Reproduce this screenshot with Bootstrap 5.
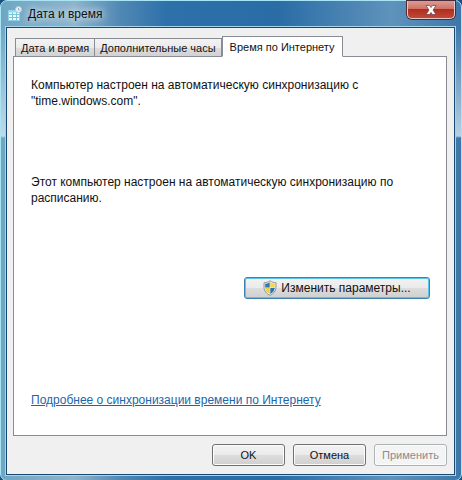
<!DOCTYPE html>
<html lang="ru">
<head>
<meta charset="utf-8">
<meta name="viewport" content="width=device-width, initial-scale=1">
<title>Дата и время</title>
<link href="https://cdn.jsdelivr.net/npm/bootstrap@5.3.0/dist/css/bootstrap.min.css" rel="stylesheet">
<style>
body { font-family: "Liberation Sans", Arial, sans-serif; font-size: 12px; line-height: 16px; color: #111; background: #174f7d; }
.win { border: 1px solid #a9e4f5; border-radius: 7px; padding: 0 6px 5px 5px;
  background: linear-gradient(#fff0 0, #fff0 26px, #d4e7f1cc 135px, #fff0 137px), linear-gradient(90deg, #6fa6c4 0, #8fb3cb 16%, #5088b4 26%, #2d70aa 36%, #2a6ca6 60%, #5f93bb 85%, #3d76a8 100%); }
.titlebar { height: 26px; padding-left: 2px; }
.title-group { gap: 6px; }
.caption-text { text-shadow: 0 0 6px #d6e6f0, 0 0 9px #d6e6f0; }
.close-btn { width: 48px; height: 18px; border: 1px solid #e6c7c9; border-top: 0; border-radius: 0 0 5px 5px; background: linear-gradient(#dc9d93 0, #cf7264 45%, #b02e20 50%, #c14835 100%); box-shadow: 0 0 0 1px #4c2b3c; }
.client { border: 1px solid #174a73; outline: 1px solid #a5d5ec; background: #f0f0f0; padding: 8px 7px 8px 6px; }
.tabs { padding-left: 2px; margin-bottom: -1px; border: 0; }
.tabs .nav-link { font-size: 11px; line-height: 16px; height: 19px; padding: 1px 5px 0; margin: 0; border: 1px solid #898c95; border-radius: 0; color: #111; background: linear-gradient(#f3f3f3, #ebebeb 50%, #dddddd 51%, #d2d2d2); white-space: nowrap; }
.tabs .nav-item + .nav-item .nav-link { border-left: 0; }
.tabs .nav-link.active { height: 21px; padding: 1px 7px 0; border: 1px solid #898c95 !important; border-bottom-color: #fff !important; background: #fff; color: #111; }
.sheet { border: 1px solid #898c95; background: #fff; padding: 20px 16px 27px 17px; }
.sync-note { min-height: 97px; margin: 0; }
.schedule-note { min-height: 103px; margin: 0; }
.cmd { font-size: 12px; line-height: 16px; height: 22px; padding: 0; color: #111; border: 1px solid #707070; border-radius: 3px; background: linear-gradient(#f2f2f2, #ebebeb 50%, #dddddd 51%, #cfcfcf); box-shadow: inset 0 0 0 1px #fcfcfc; }
.cmd-foot { width: 73px; font-size: 11px; }
.cmd-main { width: 186px; border-color: #3c7fb1; box-shadow: inset 0 0 0 1px #5cc5e8; }
.cmd:disabled { color: #8b8b8b; border-color: #adb2b5; background: #f4f4f4; opacity: 1; }
.more { color: #1b66a8; }
.more-row { margin-top: 93px; }
</style>
</head>
<body>
<main class="win">
  <header class="titlebar d-flex align-items-start justify-content-between">
    <div class="title-group d-flex align-items-center h-100">
      <svg width="14" height="16" viewBox="0 0 14 16" aria-hidden="true">
        <path d="M.5 4.500H11.500V14.500H.5Z" fill="#eafcfe" stroke="#8fd0e2"/>
        <path d="M1 8.500H11M1 11.500H11M4.500 6V14M8.500 6V14" stroke="#74c4db"/>
        <path d="M1 5.500H11" stroke="#9adbe9" stroke-width="2"/>
        <circle cx="10.500" cy="3.500" r="3" fill="#e9f2f6" stroke="#b3c9d6"/>
        <path d="M10.500 2V4H12" fill="none" stroke="#7f9fb2" stroke-width=".8"/>
      </svg>
      <span class="caption-text">Дата и время</span>
    </div>
    <button type="button" class="close-btn d-flex align-items-center justify-content-center p-0" aria-label="Закрыть">
      <svg width="12" height="10" viewBox="0 0 12 10" aria-hidden="true"><path d="M1 .5H4.500L6 2.500 7.500.5H11L8 5 11 9.500H7.500L6 7.500 4.500 9.500H1L4 5Z" fill="#fff" stroke="#6b3a40" stroke-width=".7"/></svg>
    </button>
  </header>
  <div class="client">
    <ul class="nav tabs align-items-end flex-nowrap position-relative" role="tablist">
      <li class="nav-item" role="presentation"><button type="button" class="nav-link" role="tab">Дата и время</button></li>
      <li class="nav-item" role="presentation"><button type="button" class="nav-link" role="tab">Дополнительные часы</button></li>
      <li class="nav-item" role="presentation"><button type="button" class="nav-link active" role="tab" aria-selected="true">Время по Интернету</button></li>
    </ul>
    <section class="sheet">
      <p class="sync-note">Компьютер настроен на автоматическую синхронизацию с "time.windows.com".</p>
      <p class="schedule-note">Этот компьютер настроен на автоматическую синхронизацию по расписанию.</p>
      <div class="d-flex justify-content-end">
        <button type="button" class="cmd cmd-main d-flex align-items-center justify-content-center gap-1">
          <svg width="14" height="16" viewBox="0 0 14 16" aria-hidden="true">
            <path d="M7 .7C5 2.200 3 2.700 1 2.700V7C1 11 3.500 13.800 7 15.300 10.500 13.800 13 11 13 7V2.700C11 2.700 9 2.200 7 .7Z" fill="#e8edf0" stroke="#75848c" stroke-width=".8"/>
            <path d="M6.700 2.200Q4.500 3.700 2.200 3.800V7.500H6.700Z" fill="#3477b5"/>
            <path d="M7.300 2.200Q9.500 3.700 11.800 3.800V7.500H7.300Z" fill="#f2d64b"/>
            <path d="M2.200 8.100H6.700V13.900Q2.800 12 2.200 8.100Z" fill="#f0cf3c"/>
            <path d="M7.300 8.100H11.800Q11.200 12 7.300 13.900Z" fill="#2f70ae"/>
          </svg>
          <span>Изменить параметры...</span>
        </button>
      </div>
      <div class="more-row"><a href="#" class="more">Подробнее о синхронизации времени по Интернету</a></div>
    </section>
    <footer class="d-flex justify-content-end gap-2 pt-2">
      <button type="button" class="cmd cmd-foot">OK</button>
      <button type="button" class="cmd cmd-foot">Отмена</button>
      <button type="button" class="cmd cmd-foot" disabled>Применить</button>
    </footer>
  </div>
</main>
<script src="https://cdn.jsdelivr.net/npm/bootstrap@5.3.0/dist/js/bootstrap.bundle.min.js"></script>
</body>
</html>
